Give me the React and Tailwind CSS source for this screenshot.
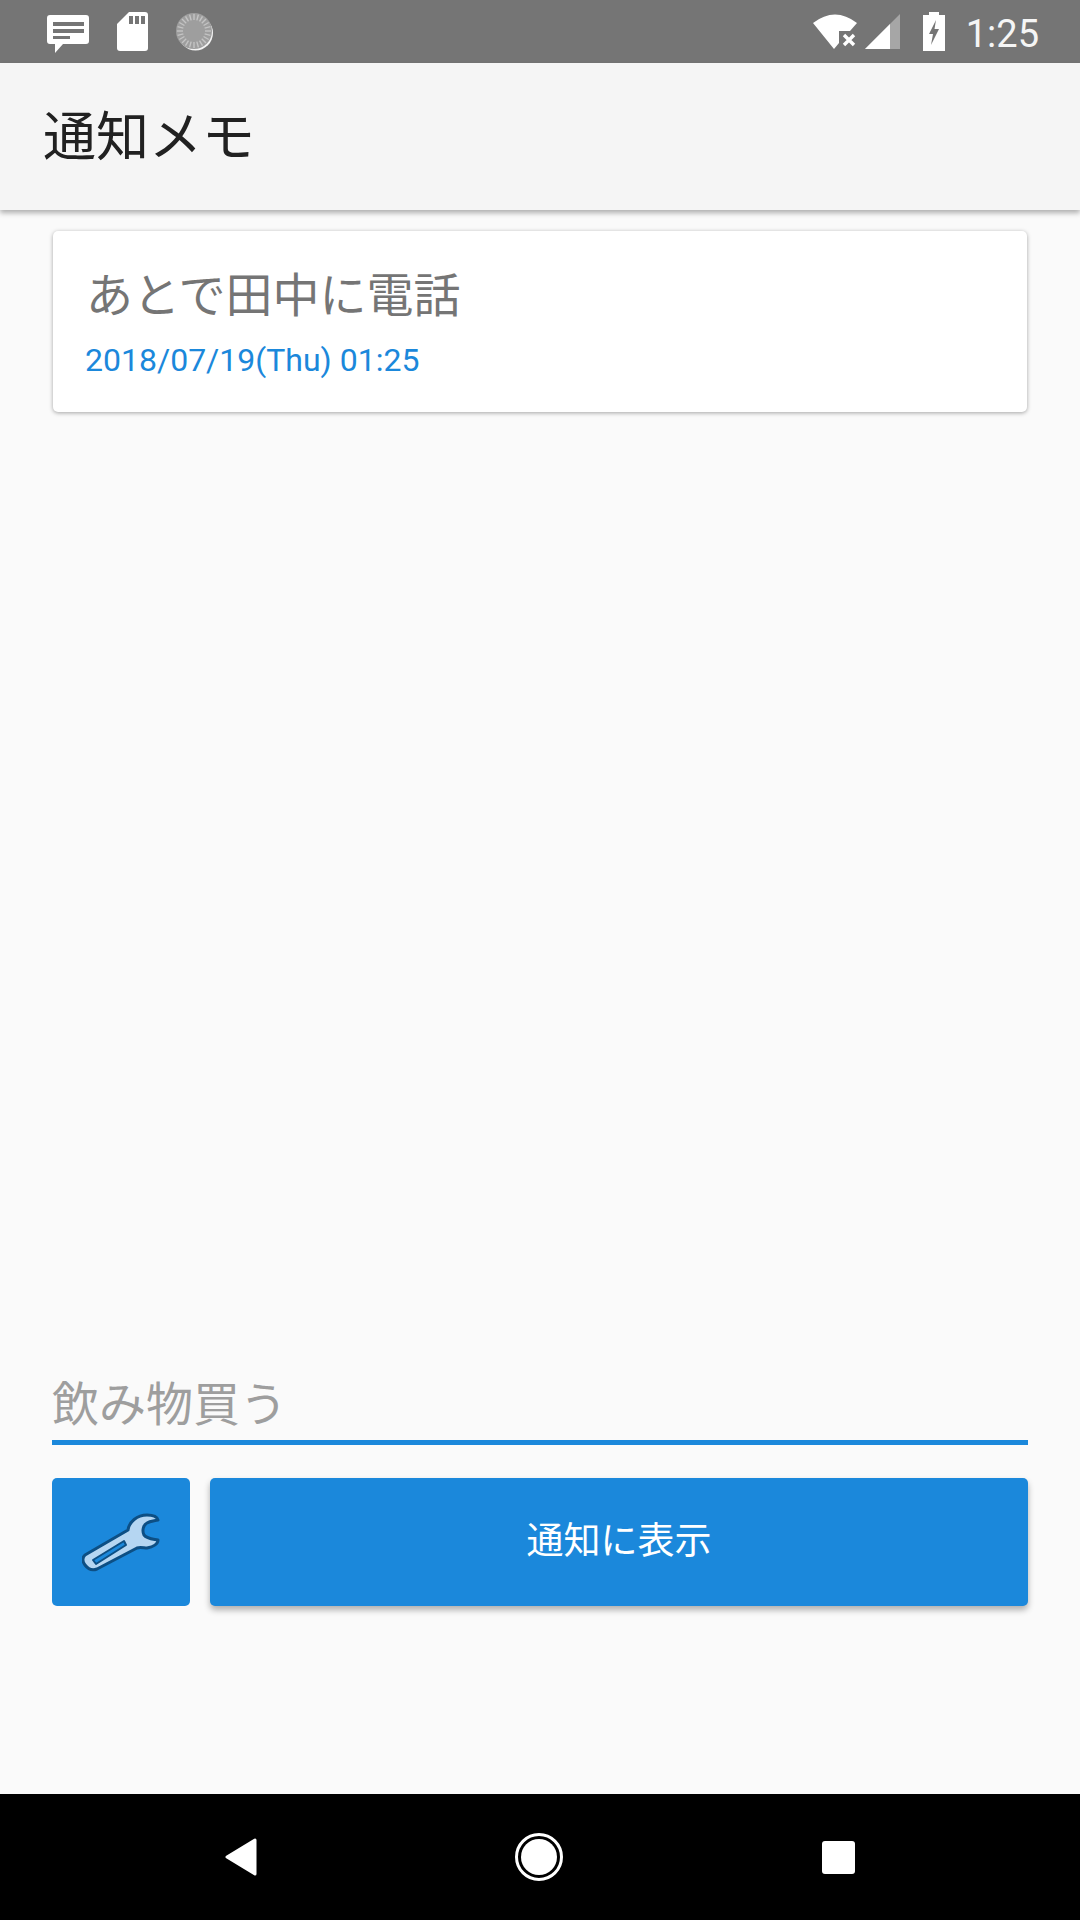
const jp = "font-['Roboto','Noto_Sans_CJK_JP',sans-serif]";

function ChatIcon() {
  return (
    <svg width="42" height="38" viewBox="0 0 42 38" className="mt-[5px]">
      <path d="M3 0H39Q42 0 42 3V26Q42 29 39 29H16L8 38V29H3Q0 29 0 26V3Q0 0 3 0Z" fill="#fff" />
      <rect x="6" y="7" width="31" height="4" fill="#757575" />
      <rect x="6" y="14" width="31" height="4" fill="#757575" />
      <rect x="6" y="21" width="17" height="3" fill="#757575" />
    </svg>
  );
}

function SdIcon() {
  return (
    <svg width="31" height="39" viewBox="0 0 31 39">
      <path d="M12 0H28Q31 0 31 3V36Q31 39 28 39H3Q0 39 0 36V12Z" fill="#fff" />
      <rect x="12" y="4" width="4" height="8" fill="#757575" />
      <rect x="18" y="4" width="4" height="8" fill="#757575" />
      <rect x="24" y="4" width="4" height="8" fill="#757575" />
    </svg>
  );
}

function SpinnerIcon() {
  const ticks = Array.from({ length: 24 }, (_, i) => i * 15);
  return (
    <svg width="38" height="38" viewBox="0 0 38 38">
      <circle cx="19.5" cy="20" r="17.5" fill="#f2f2f2" />
      <circle cx="18" cy="18" r="18" fill="#9e9e9e" />
      {ticks.map((a) => (
        <rect key={a} x="17.3" y="1" width="1.4" height="6" fill="#c4c4c4" transform={`rotate(${a} 18 18)`} />
      ))}
    </svg>
  );
}

function WifiIcon() {
  return (
    <svg width="45" height="36" viewBox="0 0 45 36">
      <path d="M0 9Q22 -8 44 9L37 17H26V29L21 35Z" fill="#fff" />
      <path d="M31 21L41 31M41 21L31 31" stroke="#fff" strokeWidth="3.4" />
    </svg>
  );
}

function SignalIcon() {
  return (
    <svg width="36" height="36" viewBox="0 0 36 36">
      <path d="M0 35L35 0V35Z" fill="#a6a6a6" />
      <path d="M0 35L25 10V35Z" fill="#fff" />
    </svg>
  );
}

function BatteryIcon() {
  return (
    <svg width="22" height="39" viewBox="0 0 22 39">
      <path d="M6 0H16V3H22V39H0V3H6Z" fill="#fff" />
      <path d="M13 8L6 22H10L8 33L16 17H11.5Z" fill="#757575" />
    </svg>
  );
}

function WrenchIcon() {
  return (
    <svg width="78" height="60" viewBox="0 0 78 60">
      <path
        d="M3 43L46 18C47 10 55 3 65 3C70 3 75 4 76 8C72 9 68 9 65 11C61 13 60 19 62 23C65 27 71 27 76 28C76 32 71 35 65 36C62 36 58 35 55 36L15 57C10 59 6 57 3 53C0 49 0 46 3 43Z"
        fill="#b5d6f2"
        stroke="#0d4f84"
        strokeWidth="3"
        strokeLinejoin="round"
      />
      <path d="M11 48L42 29L44 33L14 52Z" fill="#1b88db" stroke="#0d4f84" strokeWidth="2" strokeLinejoin="round" />
    </svg>
  );
}

function StatusBar() {
  return (
    <div className="h-[63px] bg-[#757575] flex items-center justify-between pl-[47px] pr-[41px] shrink-0">
      <div className="flex items-center gap-[28px]">
        <ChatIcon />
        <SdIcon />
        <SpinnerIcon />
      </div>
      <div className="flex items-center">
        <WifiIcon />
        <div className="ml-[7px]"><SignalIcon /></div>
        <div className="ml-[22px]"><BatteryIcon /></div>
        <span className="ml-[21px] pt-[4px] text-[38px] leading-none text-[#f5f5f5] font-['Roboto',sans-serif]">1:25</span>
      </div>
    </div>
  );
}

function NavBar() {
  return (
    <div className="h-[126px] bg-black flex items-center justify-center shrink-0">
      <svg width="32" height="38" viewBox="0 0 32 38" className="mr-[258px]">
        <path d="M30 2V36L2 19Z" fill="#fff" stroke="#fff" strokeWidth="3" strokeLinejoin="round" />
      </svg>
      <div className="w-[48px] h-[48px] rounded-full border-[3px] border-white flex items-center justify-center">
        <div className="w-[36px] h-[36px] rounded-full bg-white" />
      </div>
      <div className="w-[33px] h-[33px] rounded-[3px] bg-white ml-[259px]" />
    </div>
  );
}

export default function App() {
  return (
    <div className={`w-[1080px] h-[1920px] flex flex-col bg-[#fafafa] overflow-hidden ${jp}`}>
      <StatusBar />

      <header className="h-[147px] bg-[#f5f5f5] flex items-center pl-[43px] pt-[4px] shrink-0 shadow-[0_3px_5px_rgba(0,0,0,0.3)] relative">
        <h1 className="text-[53px] font-normal text-[#212121] leading-none">通知メモ</h1>
      </header>

      <main className="flex-1 flex flex-col px-[52px]">
        <div className="mt-[21px] mx-px h-[181px] bg-white rounded-[5px] shadow-[0_1px_4px_rgba(0,0,0,0.35)] pl-[32px] pt-[41px]">
          <div className="text-[47px] leading-none text-[#757575] pl-[1px]">あとで田中に電話</div>
          <div className="mt-[25px] text-[32px] leading-none text-[#1b88db]">2018/07/19(Thu) 01:25</div>
        </div>

        <div className="mt-auto border-b-[5px] border-[#1b88db] pb-[12px]">
          <input
            readOnly
            placeholder="飲み物買う"
            className="w-full h-[48px] bg-transparent text-[47px] leading-none outline-none placeholder:text-[#9e9e9e]"
          />
        </div>

        <div className="mt-[33px] mb-[188px] flex gap-[20px] h-[128px]">
          <button className="w-[138px] rounded-[5px] bg-[#1b88db] flex items-center justify-center">
            <WrenchIcon />
          </button>
          <button className="flex-1 rounded-[5px] bg-[#1b88db] text-white text-[37px] shadow-[0_4px_6px_rgba(0,0,0,0.3)]">
            通知に表示
          </button>
        </div>
      </main>

      <NavBar />
    </div>
  );
}
